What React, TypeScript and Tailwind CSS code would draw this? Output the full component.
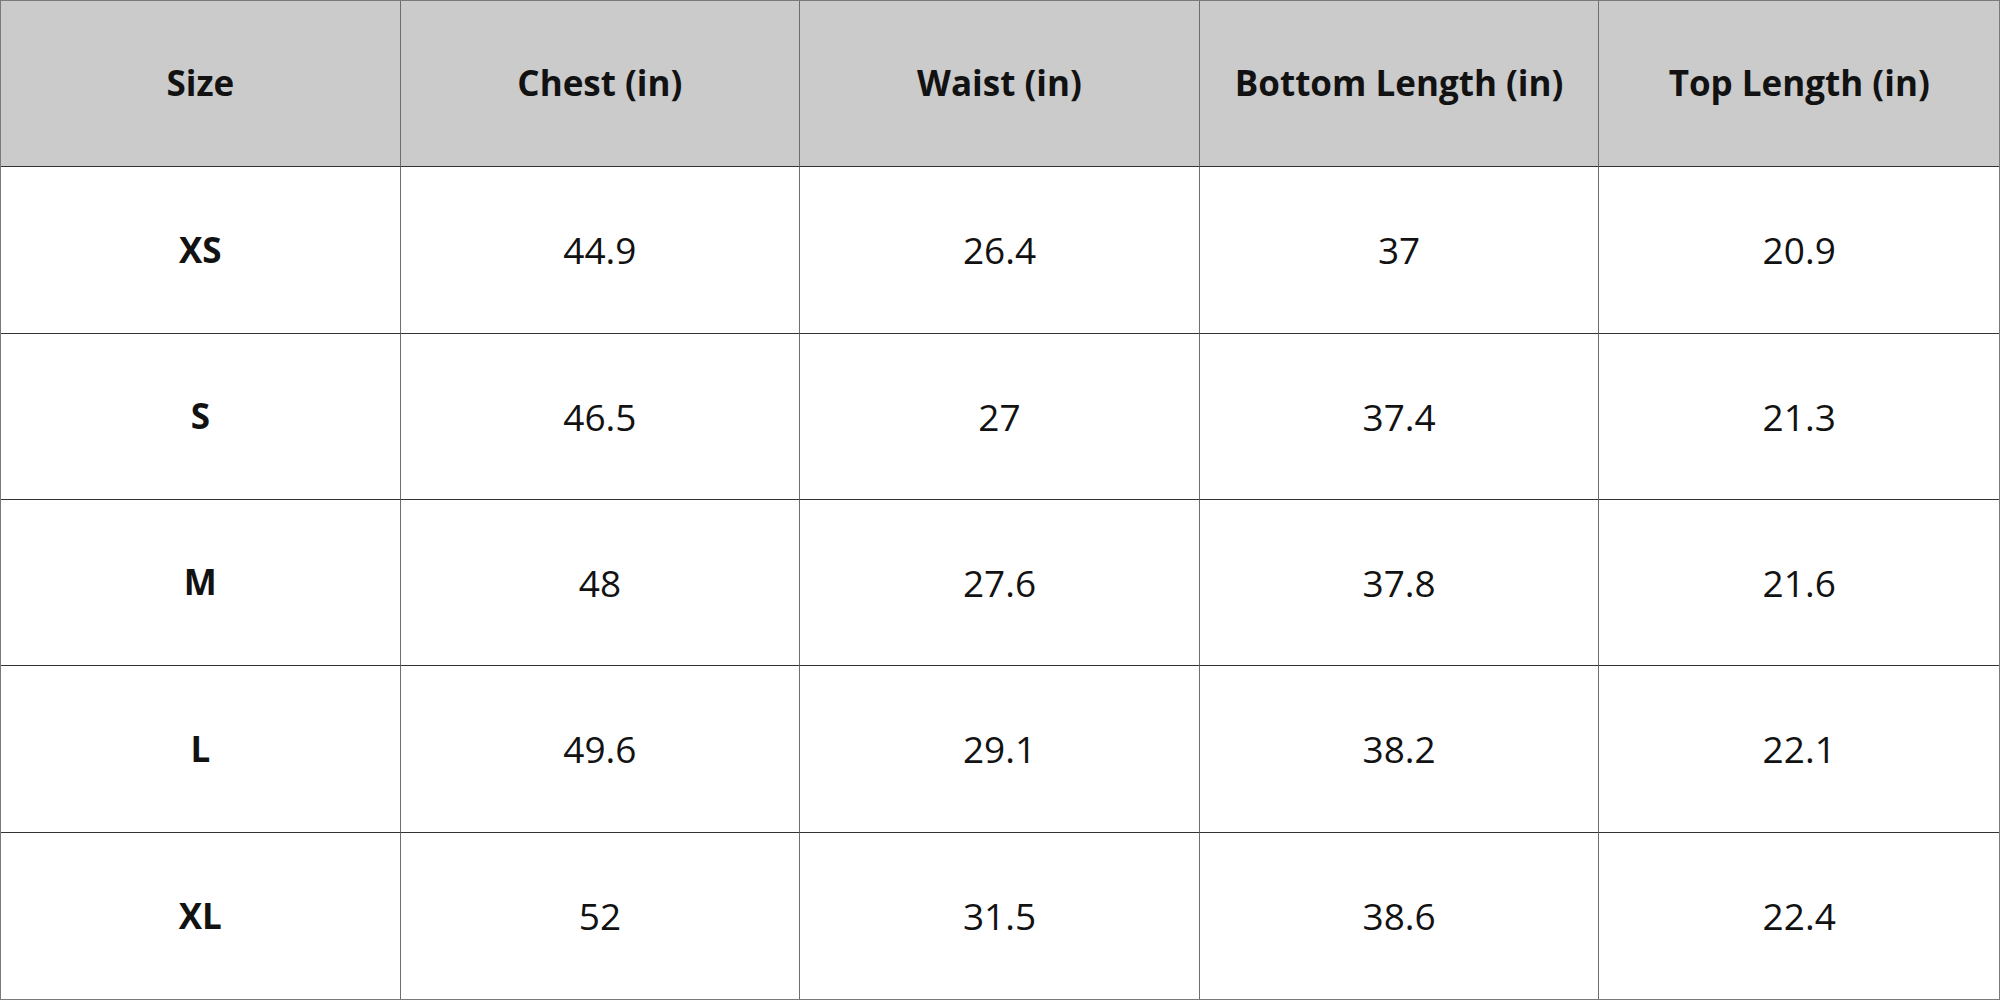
import React from "react";

const headers = ["Size", "Chest (in)", "Waist (in)", "Bottom Length (in)", "Top Length (in)"];
const rows = [
  ["XS", "44.9", "26.4", "37", "20.9"],
  ["S", "46.5", "27", "37.4", "21.3"],
  ["M", "48", "27.6", "37.8", "21.6"],
  ["L", "49.6", "29.1", "38.2", "22.1"],
  ["XL", "52", "31.5", "38.6", "22.4"],
];

export default function App() {
  return (
    <div
      className="w-[2000px] h-[1000px] bg-white grid grid-cols-5 grid-rows-6 border border-[#7a7a7a] text-[#121212]"
      style={{ fontFamily: '"Open Sans", "Noto Sans", sans-serif' }}
    >
      {headers.map((h, i) => (
        <div
          key={h}
          className={`bg-[#cbcbcb] flex items-center justify-center text-[35px] font-bold border-b border-b-[#333333] ${i < 4 ? "border-r border-r-[#6e6e6e]" : ""}`}
        >
          {h}
        </div>
      ))}
      {rows.map((r, ri) =>
        r.map((c, ci) => (
          <div
            key={ri + "-" + ci}
            className={`flex items-center justify-center ${ci === 0 ? "font-bold text-[35px]" : "font-normal text-[37px]"} ${ri < 4 ? "border-b border-b-[#333333]" : ""} ${ci < 4 ? "border-r border-r-[#6e6e6e]" : ""}`}
          >
            {c}
          </div>
        ))
      )}
    </div>
  );
}
